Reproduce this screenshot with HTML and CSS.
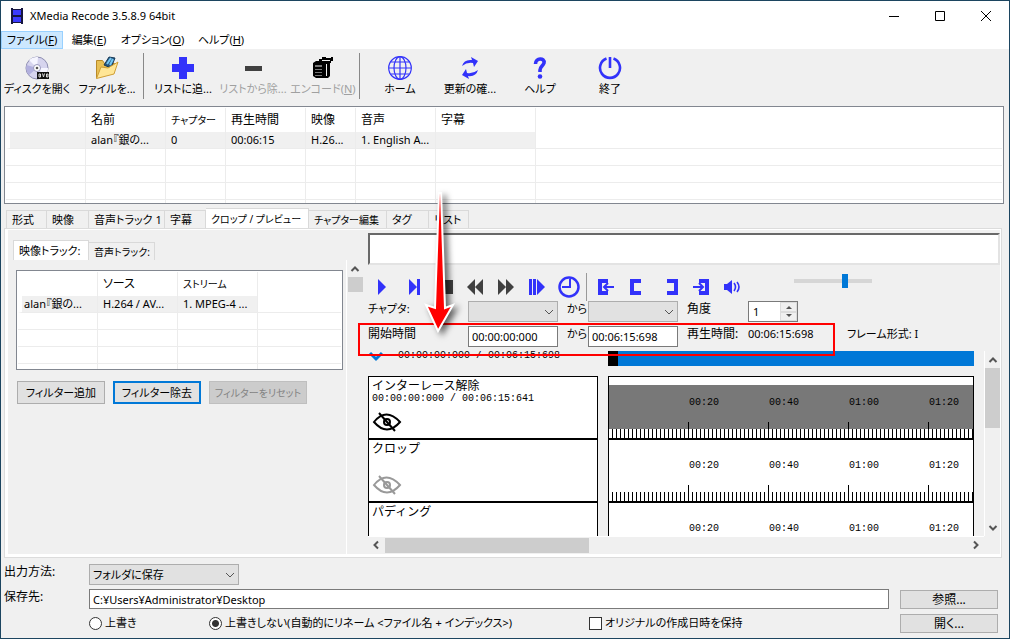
FILE: index.html
```html
<!DOCTYPE html>
<html lang="ja">
<head>
<meta charset="utf-8">
<title>XMedia Recode 3.5.8.9 64bit</title>
<link rel="stylesheet" href="styles.css">
</head>
<body>
<div class="window">
  <header class="titlebar">
    <svg class="app-icon" width="12" height="16" viewBox="0 0 12 16"><path fill="#161640" d="M0 0h2v1h8V0h2v16h-2v-1H2v1H0z"/><path fill="#3a3aff" d="M2 2h8v5H2zM2 9h8v5H2z"/></svg>
    <h1 class="title">XMedia Recode 3.5.8.9 64bit</h1>
    <div class="window-controls">
      <button aria-label="最小化"><svg width="12" height="12"><path stroke="#000" d="M1 6.500h10"/></svg></button>
      <button aria-label="最大化"><svg width="12" height="12"><path fill="none" stroke="#000" d="M1.500 1.500h9v9h-9z"/></svg></button>
      <button aria-label="閉じる"><svg width="12" height="12"><path stroke="#000" d="M1 1l10 10M11 1L1 11"/></svg></button>
    </div>
  </header>

  <nav class="menu">
    <button class="menu-item open">ファイル(<u>F</u>)</button>
    <button class="menu-item edit">編集(<u>E</u>)</button>
    <button class="menu-item options">オプション(<u>O</u>)</button>
    <button class="menu-item">ヘルプ(<u>H</u>)</button>
  </nav>

  <div class="toolbar">
    <button class="tool">
      <svg width="24" height="24" viewBox="0 0 24 24"><circle cx="12" cy="12" r="11" fill="#d6d4ee" stroke="#8d8db0"/><path fill="#f5f5ff" d="M12 12L4 4a11 11 0 0 1 9-3zM12 12l8 8a11 11 0 0 0 3-8z"/><path fill="#b2b0de" d="M12 12L1.500 9A11 11 0 0 0 4 19z"/><circle cx="12" cy="12" r="3.500" fill="#fff" stroke="#9998bd"/><circle cx="12" cy="12" r="1.300" fill="#555"/><path fill="#111" d="M12 16h12v7H12z"/><path fill="none" stroke="#ddd" d="M14 18v3h1.500v-3zM17.500 17.500l1 3.500 1-3.500M21.500 18v3H23v-3z"/></svg>
      <span>ディスクを開く</span>
    </button>
    <button class="tool">
      <svg width="24" height="24" viewBox="0 0 24 24"><path fill="#e8c054" stroke="#b98a28" d="M1.500 22V4.500h6l2 3h10V12z"/><path fill="#29567d" stroke="#173a58" d="M9 9l5-8 6 1-4 10z"/><path stroke="#74c8f5" stroke-width="2" d="M12 8l4-6M15 9l3-6"/><path fill="#ffe696" stroke="#d09f35" d="M1.500 22.500L6 11l7 1 10-6-4 12z"/></svg>
      <span>ファイルを...</span>
    </button>
    <i class="tool-separator"></i>
    <button class="tool">
      <svg width="24" height="24" viewBox="0 0 24 24"><path fill="#3232fa" d="M8 1h8v7h7v8h-7v7H8v-7H1V8h7z"/></svg>
      <span>リストに追...</span>
    </button>
    <button class="tool" disabled>
      <svg width="24" height="24" viewBox="0 0 24 24"><path fill="#404040" d="M4 10h17v5H4z"/></svg>
      <span>リストから除...</span>
    </button>
    <button class="tool" disabled>
      <svg width="24" height="24" viewBox="0 0 24 24"><path fill="#000" d="M2 7l3-2h3V3h3V1h4v1h5V1h2v4h-2v2h-1v13l-2 2H5l-3-2z"/><path fill="#777" d="M4 9h7v2H4zM4 13h7v1H4zM4 16h7v1H4zM4 19h7v1H4z"/><path stroke="#eee" d="M11 4.500h8M15.500 8v12"/></svg>
      <span>エンコード(<u>N</u>)</span>
    </button>
    <i class="tool-separator wide"></i>
    <button class="tool">
      <svg width="24" height="24" viewBox="0 0 24 24" fill="none" stroke="#3232fa" stroke-width="1.200"><circle cx="12" cy="12" r="11.300"/><ellipse cx="12" cy="12" rx="6" ry="11.300"/><path d="M12 1v22M1 12h22M3 6h18M3 18h18"/></svg>
      <span>ホーム</span>
    </button>
    <button class="tool">
      <svg width="24" height="24" viewBox="0 0 24 24" fill="#3232fa"><path d="M4 10q2-7 10-6l-1-3 7 4-4 6-1-4q-6-1-11 3zM20 14q-2 7-10 6l1 3-7-4 4-6 1 4q6 1 11-3z"/></svg>
      <span>更新の確...</span>
    </button>
    <button class="tool">
      <svg width="24" height="24" viewBox="0 0 24 24"><path fill="none" stroke="#3232fa" stroke-width="3.600" d="M7.500 8C7.500 1.500 17 1.500 16 7c-1 3-4 3.500-4 7v2"/><circle cx="12" cy="20.500" r="2.300" fill="#3232fa"/></svg>
      <span>ヘルプ</span>
    </button>
    <button class="tool">
      <svg width="24" height="24" viewBox="0 0 24 24" fill="none" stroke="#3232fa" stroke-width="2.600"><path d="M8.500 2.500a10 10 0 1 0 7 0M12 1v11"/></svg>
      <span>終了</span>
    </button>
  </div>

  <main class="content">
    <div class="list">
      <table class="grid">
        <colgroup><col class="w80"><col class="w80"><col class="w60"><col class="w80"><col class="w50"><col class="w80"><col class="w100"><col></colgroup>
        <thead><tr><th></th><th>名前</th><th class="compact">チャプター</th><th>再生時間</th><th>映像</th><th>音声</th><th>字幕</th><th></th></tr></thead>
        <tbody>
          <tr class="selected"><td></td><td>alan『銀の...</td><td>0</td><td>00:06:15</td><td>H.26...</td><td>1. English A...</td><td></td><td></td></tr>
          <tr><td></td><td></td><td></td><td></td><td></td><td></td><td></td><td></td></tr>
          <tr><td></td><td></td><td></td><td></td><td></td><td></td><td></td><td></td></tr>
          <tr><td></td><td></td><td></td><td></td><td></td><td></td><td></td><td></td></tr>
          <tr><td></td><td></td><td></td><td></td><td></td><td></td><td></td><td></td></tr>
        </tbody>
      </table>
    </div>

    <div class="tabs main-tabs" role="tablist">
      <button class="tab t41" role="tab">形式</button>
      <button class="tab t42" role="tab">映像</button>
      <button class="tab t76" role="tab">音声トラック 1</button>
      <button class="tab t41" role="tab">字幕</button>
      <button class="tab t103 compact active" role="tab" aria-selected="true">クロップ / プレビュー</button>
      <button class="tab t78 compact" role="tab">チャプター編集</button>
      <button class="tab t42" role="tab">タグ</button>
      <button class="tab t40" role="tab">リスト</button>
    </div>

    <div class="panel">
      <section class="tracks">
        <div class="tabs" role="tablist">
          <button class="tab t76 active" role="tab" aria-selected="true">映像トラック:</button>
          <button class="tab t66 compact" role="tab">音声トラック:</button>
        </div>
        <div class="list track-list">
          <table class="grid">
            <colgroup><col class="w80"><col class="w80"><col class="w80"><col></colgroup>
            <thead><tr><th></th><th>ソース</th><th class="compact">ストリーム</th><th></th></tr></thead>
            <tbody>
              <tr class="selected"><td>alan『銀の...</td><td>H.264 / AV...</td><td>1. MPEG-4 ...</td><td></td></tr>
              <tr><td></td><td></td><td></td><td></td></tr>
              <tr><td></td><td></td><td></td><td></td></tr>
              <tr><td></td><td></td><td></td><td></td></tr>
              <tr><td></td><td></td><td></td><td></td></tr>
            </tbody>
          </table>
        </div>
        <div class="filter-buttons">
          <button class="button">フィルター追加</button>
          <button class="button focused">フィルター除去</button>
          <button class="button wide" disabled>フィルターをリセット</button>
        </div>
      </section>

      <div class="pane-scroll">
        <svg width="10" height="8"><path class="chevron" d="M1.500 6L5 2.500 8.500 6"/></svg>
        <i class="thumb"></i>
      </div>

      <section class="preview">
        <div class="screen"></div>
        <div class="player">
          <button aria-label="再生"><svg width="24" height="24"><path fill="#3232fa" d="M8 4l8 8-8 8z"/></svg></button>
          <button aria-label="次のフレーム"><svg width="24" height="24"><path fill="#3232fa" d="M8 4l8 8-8 8zM16 4h3v16h-3z"/></svg></button>
          <button aria-label="停止"><svg width="24" height="24"><path fill="#404040" d="M6 5h15v14H6z"/></svg></button>
          <button aria-label="巻き戻し"><svg width="24" height="24"><path fill="#404040" d="M4 12l8-8v16zM12 12l8-8v16z"/></svg></button>
          <button aria-label="早送り"><svg width="24" height="24"><path fill="#404040" d="M4 4l8 8-8 8zM12 4l8 8-8 8z"/></svg></button>
          <button aria-label="スロー再生"><svg width="24" height="24"><path fill="#3232fa" d="M4 4h3v16H4zM8 4h3v16H8zM12 4l8 8-8 8z"/></svg></button>
          <button aria-label="時間へ移動"><svg width="24" height="24" fill="none" stroke="#3232fa"><circle cx="13" cy="12" r="9.500" stroke-width="2.500"/><path stroke-width="2" d="M14 4v8H6"/></svg></button>
          <i class="player-separator"></i>
          <button class="mark-button" aria-label="開始位置へ"><svg width="24" height="24" fill="none" stroke="#3232fa"><path stroke-width="4" d="M14 6H6v12h8"/><path stroke-width="2" d="M20 12h-9M14 8l-4 4 4 4"/></svg></button>
          <button class="mark-button" aria-label="開始位置"><svg width="24" height="24"><path fill="none" stroke="#3232fa" stroke-width="4" d="M17 6H8v12h9"/></svg></button>
          <button class="mark-button mark-end" aria-label="終了位置"><svg width="24" height="24"><path fill="none" stroke="#3232fa" stroke-width="4" d="M7 6h9v12H7"/></svg></button>
          <button class="mark-button" aria-label="終了位置へ"><svg width="24" height="24" fill="none" stroke="#3232fa"><path stroke-width="4" d="M9 6h8v12H9"/><path stroke-width="2" d="M3 12h10M9 8l4 4-4 4"/></svg></button>
          <button class="mark-button" aria-label="音量"><svg width="24" height="24"><path fill="#3232fa" d="M4 9h3l5-4v14l-5-4H4z"/><path fill="none" stroke="#3232fa" stroke-width="1.600" d="M14 8q3 4 0 8M17 7q4 5 0 10"/></svg></button>
          <input class="volume" type="range" min="0" max="100" value="67" aria-label="音量調整">
        </div>

        <div class="settings">
          <label for="chapter-from">チャプタ:</label>
          <span class="select"><select id="chapter-from"><option></option></select><svg width="10" height="6"><path class="arrow" d="M1 1l4 4 4-4"/></svg></span>
          <label class="to" for="chapter-to">から</label>
          <span class="select"><select id="chapter-to"><option></option></select><svg width="10" height="6"><path class="arrow" d="M1 1l4 4 4-4"/></svg></span>
          <label class="side" for="angle">角度</label>
          <span class="spin"><input id="angle" type="text" value="1"><span class="spin-buttons"><button aria-label="増やす"><svg width="8" height="4"><path fill="#555" d="M1 4l3-3 3 3z"/></svg></button><button aria-label="減らす"><svg width="8" height="4"><path fill="#555" d="M1 0l3 3 3-3z"/></svg></button></span></span>
          <span></span>

          <label for="start">開始時間</label>
          <input class="field" id="start" type="text" value="00:00:00:000">
          <label class="to" for="end">から</label>
          <input class="field" id="end" type="text" value="00:06:15:698">
          <span class="side">再生時間:</span>
          <span class="latin">00:06:15:698</span>
          <span class="latin">フレーム形式: I</span>
        </div>

        <div class="timeline">
          <div class="timeline-view">
            <div class="names">
              <div class="position"><svg width="16" height="14"><path fill="none" stroke="#0078d7" stroke-width="3" d="M2 4l6 6 6-6"/></svg><span class="mono">00:00:00:000 / 00:06:15:698</span></div>
              <div class="track-name"><span>インターレース解除</span><span class="mono">00:00:00:000 / 00:06:15:641</span>
                <svg class="eye" width="30" height="20" fill="none" stroke="#000" stroke-width="2"><path d="M2 10q12-15 26 0-13 15-26 0zM7 1l16 18"/><circle cx="15" cy="10" r="3"/></svg></div>
              <div class="track-name"><span>クロップ</span>
                <svg class="eye" width="30" height="20" fill="none" stroke="#999" stroke-width="2"><path d="M2 10q12-15 26 0-13 15-26 0zM7 1l16 18"/><circle cx="15" cy="10" r="3"/></svg></div>
              <div class="track-name"><span>パディング</span></div>
            </div>
            <div class="rulers">
              <div class="progress"></div>
              <div class="ruler current"><div class="marks mono"><span>00:20</span><span>00:40</span><span>01:00</span><span>01:20</span></div></div>
              <div class="ruler"><div class="marks mono"><span>00:20</span><span>00:40</span><span>01:00</span><span>01:20</span></div></div>
              <div class="ruler"><div class="marks mono"><span>00:20</span><span>00:40</span><span>01:00</span><span>01:20</span></div></div>
            </div>
          </div>
          <div class="v-scroll">
            <svg width="10" height="8"><path class="chevron" d="M1.500 6L5 2.500 8.500 6"/></svg>
            <i class="thumb"></i>
            <svg width="10" height="8"><path class="chevron" d="M1.500 2L5 5.500 8.500 2"/></svg>
          </div>
          <div class="h-scroll">
            <svg width="8" height="10"><path class="chevron" d="M6 1.500L2.500 5 6 8.500"/></svg>
            <i class="thumb"></i>
            <svg width="8" height="10"><path class="chevron" d="M2 1.500L5.500 5 2 8.500"/></svg>
          </div>
        </div>
      </section>
    </div>
  </main>

  <form class="output">
    <label for="method">出力方法:</label>
    <span class="select method"><select id="method"><option>フォルダに保存</option></select><svg width="10" height="6"><path class="arrow" d="M1 1l4 4 4-4"/></svg></span>
    <span></span>
    <label for="folder">保存先:</label>
    <input class="field" id="folder" type="text" value="C:¥Users¥Administrator¥Desktop">
    <button class="button" type="button">参照...</button>
    <span></span>
    <div class="choices">
      <label><input type="radio" name="overwrite">上書き</label>
      <label><input type="radio" name="overwrite" checked>上書きしない(自動的にリネーム &lt;ファイル名 + インデックス&gt;)</label>
      <label><input type="checkbox">オリジナルの作成日時を保持</label>
    </div>
    <button class="button" type="button">開く...</button>
  </form>

  <div class="callout"></div>
  <svg class="callout-arrow" width="40" height="150" viewBox="0 0 40 150"><path fill="#f00" stroke="#fff" stroke-width="2" d="M21 4h2l4 115 8-3-15 26-12-26 9 3z"/></svg>
</div>
</body>
</html>
```
FILE: styles.css
```css
* { box-sizing: border-box; }

body {
  margin: 0;
  color: #000;
  font: 12px/16px "Noto Sans", "Noto Sans CJK JP", sans-serif;
  font-feature-settings: "palt";
}

button, input, select { font: inherit; font-feature-settings: inherit; color: inherit; margin: 0; }
button { padding: 0; border: 0; background: none; white-space: nowrap; }
svg { display: block; flex: none; }

.latin { font-size: 11px; }
.mono { font: 10px/12px "Liberation Mono", monospace; }
.chevron { fill: none; stroke: #555; stroke-width: 2; }
.arrow { fill: none; stroke: #555; }
.thumb { background: #cdcdcd; }

.window {
  position: relative;
  display: flex;
  flex-direction: column;
  min-height: 100vh;
  border: 1px solid #1c4560;
  background: #f0f0f0;
}

/* Title and menu */
.titlebar { display: flex; align-items: center; height: 30px; padding-left: 10px; background: #fff; }
.title { flex: 1; margin: 0 0 0 7px; font-size: 11px; font-weight: 400; }
.window-controls { display: flex; }
.window-controls button { display: grid; place-items: center; width: 46px; height: 28px; }

.menu { display: flex; height: 18px; background: #fff; font-size: 11px; }
.menu-item { width: 62px; line-height: 16px; border: 1px solid transparent; }
.menu-item.open { background: #cce8ff; border-color: #99d1ff; }
.menu-item.edit { width: 52px; }
.menu-item.options { width: 75px; }

/* Toolbar */
.toolbar { display: flex; height: 57px; padding-left: 1px; }
.tool { display: flex; flex-direction: column; align-items: center; gap: 1px; width: 70px; padding-top: 7px; font-size: 11px; }
.tool:disabled { color: #a0a0a0; }
.tool-separator { width: 1px; height: 46px; margin: 4px 4px 0 1px; background: #888; }
.tool-separator.wide { margin-right: 5px; }

/* Lists */
.content { display: flex; flex: 1; flex-direction: column; padding: 0 5px 0 3px; }
.list { height: 98px; overflow: hidden; padding: 1px; border: 1px solid #828790; background: #fff; }
.grid { width: 100%; table-layout: fixed; border-collapse: separate; border-spacing: 0; }
.w50 { width: 50px; }
.w60 { width: 60px; }
.w80 { width: 80px; }
.w100 { width: 100px; }
.grid th, .grid td { height: 17px; padding: 0 0 0 5px; border-right: 1px solid #ececec; overflow: hidden; text-align: left; white-space: nowrap; font-weight: 400; }
.grid th { height: 24px; }
.grid td { border-bottom: 1px solid #ececec; font-size: 11px; line-height: 16px; }
.grid .compact { font-size: 10px; }
.grid th:last-child, .grid td:last-child { border-right: 0; }
.selected td { background: #f0f0f0; }
.selected td:first-child { border-left: 4px solid #fff; padding-left: 2px; }
.selected td:last-child { background: #fff; }

/* Tabs */
.tabs { display: flex; align-items: flex-end; }
.main-tabs { height: 24px; padding: 0 2px; }
.tab { height: 18px; padding: 0 0 0 5px; border: 1px solid #d9d9d9; border-width: 1px 1px 0 0; text-align: left; font-size: 11px; overflow: hidden; }
.tab:first-child { border-left-width: 1px; }
.tab.active { height: 20px; background: #fff; }
.tab.compact { font-size: 10px; }
.t40 { width: 40px; }
.t41 { width: 41px; }
.t42 { width: 42px; }
.t66 { width: 66px; }
.t76 { width: 76px; }
.t78 { width: 78px; }
.t103 { width: 103px; }

/* Panel */
.panel {
  display: flex;
  flex: 1;
  margin-right: 2px;
  padding: 1px 1px 3px 3px;
  border: 1px solid #dcdcdc;
  background: linear-gradient(#f0f0f0, #f0f0f0) content-box, #fff;
}
.tracks { width: 338px; padding: 10px 3px 0 5px; }
.track-list { height: 100px; margin: 10px 0 11px 3px; }
.filter-buttons { display: flex; gap: 8px; padding-left: 4px; }
.button { height: 18px; border: 1px solid #adadad; background: #e1e1e1; line-height: 16px; font-size: 12px; }
.filter-buttons .button { width: 88px; height: 23px; font-size: 11px; }
.filter-buttons .wide { width: 98px; font-size: 10px; }
.filter-buttons .focused { border: 2px solid #0078d7; }
.button:disabled { background: #ccc; border-color: #bfbfbf; color: #838383; }

.pane-scroll { display: flex; flex-direction: column; align-items: center; gap: 4px; width: 17px; margin-top: 30px; padding-top: 5px; border-left: 1px solid #fff; }
.pane-scroll .thumb { width: 15px; height: 15px; }

.preview { display: flex; flex: 1; flex-direction: column; min-width: 0; padding: 3px 0 0 5px; }
.screen { height: 32px; border: 2px solid; border-color: #696969 #e3e3e3 #e3e3e3 #696969; background: #fff; }

/* Player */
.player { display: flex; align-items: center; height: 36px; padding-top: 7px; margin-left: -2px; }
.player button { display: grid; place-items: center; width: 31px; height: 24px; }
.player .mark-button { width: 30px; }
.player .mark-end { margin-left: 6px; }
.player-separator { width: 1px; height: 28px; margin: 0 4px 0 3px; background: #999; }
.volume { appearance: none; width: 78px; height: 14px; margin: 0 0 12px 47px; background: linear-gradient(#d6d6d6, #d6d6d6) center / 100% 4px no-repeat; }
.volume::-webkit-slider-thumb { appearance: none; width: 6px; height: 14px; background: #0078d7; }

/* Time and chapter settings */
.settings { display: grid; grid-template-columns: 100px 90px 30px 90px 70px 99px 1fr; row-gap: 4px; white-space: nowrap; }
.settings > * { min-height: 21px; }
.settings > label { font-size: 11px; }
.settings > label[for="start"], .settings > .side { font-size: 12px; }
.settings > .to { padding-left: 9px; }
.settings > .side { padding-left: 9px; }
.field { min-width: 0; height: 21px; padding: 0 3px; border: 1px solid #7a7a7a; background: #fff; font-size: 11px; }
.select { position: relative; display: block; height: 21px; }
.select select { appearance: none; width: 100%; height: 21px; padding: 0 3px; border: 1px solid #adadad; border-radius: 0; background: #e1e1e1; font-size: 11px; }
.select svg { position: absolute; right: 4px; top: 8px; pointer-events: none; }
.spin { display: flex; width: 50px; height: 20px; border: 1px solid #7a7a7a; background: #fff; }
.spin input { width: 31px; padding: 0 4px; border: 0; background: none; font-size: 11px; }
.spin-buttons { display: grid; flex: 1; background: #f0f0f0; }
.spin-buttons button { display: grid; place-items: center; border: 1px solid #dcdcdc; }

/* Timeline */
.timeline { display: grid; flex: 1; grid-template-columns: minmax(0, 1fr) 16px; grid-template-rows: 185px 17px; margin-top: 4px; }
.timeline-view { display: grid; grid-template-columns: 230px minmax(0, 1fr); column-gap: 10px; padding-right: 10px; overflow: hidden; }
.position { display: flex; align-items: center; gap: 14px; height: 10px; margin-bottom: 15px; }
.track-name { display: flex; flex-direction: column; height: 63px; padding: 0 3px; border: 1px solid #000; background: #fff; font: 12px/15px "Noto Sans CJK JP", sans-serif; font-feature-settings: normal; }
.track-name .mono { line-height: 14px; }
.eye { margin-top: auto; margin-bottom: 6px; }
.progress { height: 15px; margin-bottom: 10px; border-left: 10px solid #000; background: #0078d7; }
.ruler { display: flex; height: 63px; overflow: hidden; border: 1px solid #000; background: repeating-linear-gradient(to right, #fff 0 3px, #000 3px 4px) 0 bottom / 100% 9px no-repeat, #fff; }
.ruler.current { background: repeating-linear-gradient(to right, #fff 0 3px, #000 3px 4px) 0 bottom / 100% 9px no-repeat, linear-gradient(#fff 0 8px, #787878 8px); }
.marks { display: flex; flex: none; margin-left: 79px; }
.marks span { width: 80px; padding: 20px 0 0 1px; background: linear-gradient(#000, #000) 0 bottom / 1px 16px no-repeat; }
.v-scroll { display: flex; flex-direction: column; align-items: center; gap: 4px; padding: 5px 0 4px; border-left: 1px solid #fff; }
.v-scroll .thumb { width: 15px; height: 60px; margin-bottom: auto; }
.h-scroll { display: flex; align-items: center; gap: 5px; padding: 0 4px; border-top: 1px solid #fff; }
.h-scroll .thumb { width: 204px; height: 15px; margin-right: auto; }

/* Output form */
.output { display: grid; grid-template-columns: 85px 1fr 98px; row-gap: 4px; padding: 6px 11px 5px 3px; }
.output > .button { margin-top: 1px; height: 19px; }
.output > .field { height: 20px; margin-right: 11px; }
.output > .select { width: 150px; }
.choices { display: grid; grid-template-columns: 120px 380px 1fr; align-items: center; white-space: nowrap; font-size: 11px; }
.choices label { display: flex; align-items: center; gap: 3px; }
.choices input { appearance: none; width: 13px; height: 13px; border: 1px solid #333; background: #fff; }
.choices [type="radio"] { border-radius: 50%; }
.choices [type="radio"]:checked { background: radial-gradient(circle, #333 0 3px, #fff 4px); }

/* Annotation */
.callout { position: absolute; left: 357px; top: 322px; width: 477px; height: 33px; border: 2px solid #f00; pointer-events: none; }
.callout-arrow { position: absolute; left: 417px; top: 188px; pointer-events: none; filter: drop-shadow(4px 3px 3px rgba(0, 0, 0, 0.6)); }
```
